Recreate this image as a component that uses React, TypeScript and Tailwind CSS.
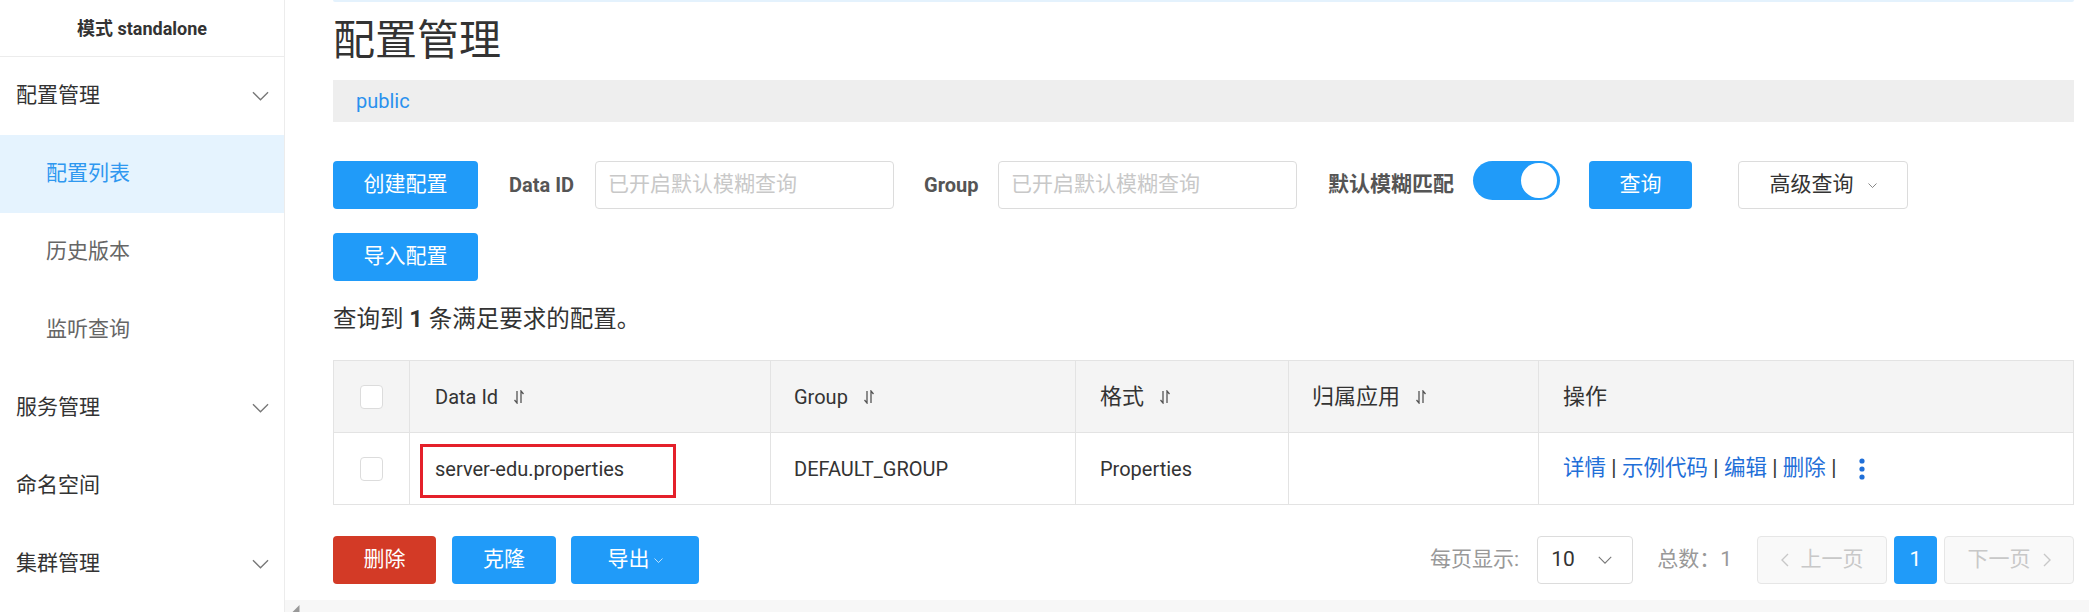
import React from 'react';

const font = "font-['Roboto','Noto_Sans_CJK_SC',sans-serif]";

const Chevron: React.FC<{ className?: string }> = ({ className }) => (
  <svg viewBox="0 0 18 10" className={className} fill="none" stroke="currentColor" strokeWidth="1.4">
    <polyline points="1,1 9,9 17,1" />
  </svg>
);

const SortIcon: React.FC = () => (
  <svg viewBox="0 0 12 14" className="w-[12px] h-[14px] ml-[15px] text-[#555]" fill="none" stroke="currentColor" strokeWidth="1.3">
    <path d="M4 1V13L1.5 10" />
    <path d="M8 13V1L10.5 4" />
  </svg>
);

const Checkbox: React.FC = () => (
  <div className="w-[23px] h-[24px] rounded-[4px] border border-[#dcdcdc] bg-white" />
);

const menu = [
  { label: '配置管理', parent: true },
  { label: '配置列表', active: true },
  { label: '历史版本' },
  { label: '监听查询' },
  { label: '服务管理', parent: true },
  { label: '命名空间', parent: true, noArrow: true },
  { label: '集群管理', parent: true },
];

const Sidebar: React.FC = () => (
  <aside className="w-[285px] shrink-0 border-r border-[#ececec] flex flex-col">
    <div className="h-[57px] border-b border-[#ececec] flex items-center justify-center text-[18px] font-bold text-[#333]">
      模式 standalone
    </div>
    {menu.map((m) => (
      <div
        key={m.label}
        className={`h-[78px] flex items-center justify-between pr-[15px] text-[21px] ${
          m.active ? 'bg-[#e5f3fe] text-[#2f98f0]' : m.parent ? 'text-[#333]' : 'text-[#666]'
        } ${m.parent ? 'pl-[16px]' : 'pl-[46px]'}`}
      >
        <span>{m.label}</span>
        {m.parent && !m.noArrow && <Chevron className="w-[17px] h-[10px] text-[#777]" />}
      </div>
    ))}
  </aside>
);

const blueBtn = 'h-[48px] rounded-[4px] bg-[#209bf9] text-white text-[21px] flex items-center justify-center shrink-0';

export default function App() {
  return (
    <div className={`w-[2089px] h-[612px] flex overflow-hidden bg-white ${font}`}>
      <Sidebar />
      <main className="flex-1 flex flex-col min-w-0">
        <div className="pl-[48px] pr-[15px] flex flex-col">
          <div className="h-[2px] bg-[#e4f2fd] rounded-b-[3px]" />
          <h1 className="mt-[18px] text-[42px] leading-[42px] text-[#333] font-normal">配置管理</h1>
          <div className="mt-[18px] h-[42px] bg-[#eeeeee] flex items-center pl-[23px] text-[20px] text-[#2a91ee]">
            public
          </div>

          <div className="mt-[39px] flex items-start">
            <button className={`${blueBtn} w-[145px]`}>创建配置</button>
            <span className="ml-[31px] w-[66px] h-[48px] flex items-center text-[20px] font-bold text-[#555] whitespace-nowrap">Data ID</span>
            <div className="ml-[20px] w-[299px] h-[48px] border border-[#dcdcdc] rounded-[4px] flex items-center pl-[12px] text-[21px] text-[#c8c8c8]">
              已开启默认模糊查询
            </div>
            <span className="ml-[30px] w-[55px] h-[48px] flex items-center text-[20px] font-bold text-[#555]">Group</span>
            <div className="ml-[19px] w-[299px] h-[48px] border border-[#dcdcdc] rounded-[4px] flex items-center pl-[12px] text-[21px] text-[#c8c8c8]">
              已开启默认模糊查询
            </div>
            <span className="ml-[31px] w-[127px] h-[48px] flex items-center text-[21px] font-bold text-[#555] whitespace-nowrap">默认模糊匹配</span>
            <div className="ml-[18px] w-[87px] h-[39px] rounded-full bg-[#209bf9] flex items-center justify-end pr-[3px] shrink-0">
              <div className="w-[36px] h-[35px] rounded-full bg-white" />
            </div>
            <button className={`${blueBtn} ml-[29px] w-[103px]`}>查询</button>
            <button className="ml-[46px] w-[170px] h-[48px] rounded-[4px] border border-[#dcdcdc] bg-white flex items-center justify-center gap-[14px] text-[21px] text-[#333]">
              高级查询
              <Chevron className="w-[9px] h-[5px] text-[#555]" />
            </button>
          </div>

          <div className="mt-[24px] flex">
            <button className={`${blueBtn} w-[145px]`}>导入配置</button>
          </div>

          <div className="mt-[24px] h-[30px] flex items-center text-[23.5px] text-[#333] whitespace-pre">
            查询到 <b className="font-bold">1</b> 条满足要求的配置。
          </div>

          <div className="mt-[25px] border border-[#e3e3e3] text-[20px] text-[#333]">
            <div className="grid grid-cols-[75px_361px_305px_213px_250px_1fr] h-[72px] bg-[#f4f4f4] border-b border-[#e3e3e3]">
              <div className="flex items-center justify-center"><Checkbox /></div>
              <div className="border-l border-[#e3e3e3] pl-[25px] flex items-center">Data Id<SortIcon /></div>
              <div className="border-l border-[#e3e3e3] pl-[23px] flex items-center">Group<SortIcon /></div>
              <div className="border-l border-[#e3e3e3] pl-[24px] flex items-center text-[22px]">格式<SortIcon /></div>
              <div className="border-l border-[#e3e3e3] pl-[23px] flex items-center text-[22px]">归属应用<SortIcon /></div>
              <div className="border-l border-[#e3e3e3] pl-[24px] flex items-center text-[22px]">操作</div>
            </div>
            <div className="grid grid-cols-[75px_361px_305px_213px_250px_1fr] h-[71px]">
              <div className="flex items-center justify-center"><Checkbox /></div>
              <div className="relative border-l border-[#e3e3e3] pl-[25px] flex items-center">
                server-edu.properties
                <div className="absolute left-[10px] top-[11px] w-[256px] h-[54px] border-[3px] border-[#e4202a]" />
              </div>
              <div className="border-l border-[#e3e3e3] pl-[23px] flex items-center">DEFAULT_GROUP</div>
              <div className="border-l border-[#e3e3e3] pl-[24px] flex items-center">Properties</div>
              <div className="border-l border-[#e3e3e3]" />
              <div className="border-l border-[#e3e3e3] pl-[24px] flex items-center text-[21.5px] text-[#1f6fd8] whitespace-pre">
                详情<span className="text-[#333]"> | </span>示例代码<span className="text-[#333]"> | </span>编辑<span className="text-[#333]"> | </span>删除<span className="text-[#333]"> | </span>
                <svg viewBox="0 0 6 22" className="ml-[17px] w-[6px] h-[22px] text-[#1f6fd8]" fill="currentColor">
                  <circle cx="3" cy="3" r="2.6" />
                  <circle cx="3" cy="11" r="2.6" />
                  <circle cx="3" cy="19" r="2.6" />
                </svg>
              </div>
            </div>
          </div>

          <div className="mt-[31px] flex items-center justify-between">
            <div className="flex items-center">
              <button className="h-[48px] w-[103px] rounded-[4px] bg-[#d33a26] text-white text-[21px]">删除</button>
              <button className={`${blueBtn} ml-[16px] w-[104px]`}>克隆</button>
              <button className={`${blueBtn} ml-[15px] w-[128px] gap-[4px]`}>
                导出<Chevron className="w-[9px] h-[5px] text-white" />
              </button>
            </div>
            <div className="flex items-center text-[21px]">
              <span className="text-[#999]">每页显示:</span>
              <div className="ml-[18px] w-[96px] h-[48px] rounded-[4px] border border-[#dcdcdc] flex items-center justify-between pl-[13px] pr-[20px] text-[#333]">
                10
                <Chevron className="w-[14px] h-[8px] text-[#777]" />
              </div>
              <span className="ml-[24px] text-[#999]">总数：1</span>
              <div className="ml-[25px] w-[130px] h-[48px] rounded-[4px] border border-[#e6e6e6] bg-[#f9f9f9] flex items-center justify-center gap-[12px] text-[#c8c8c8]">
                <svg viewBox="0 0 8 14" className="w-[8px] h-[14px]" fill="none" stroke="currentColor" strokeWidth="1.4"><polyline points="7,1 1,7 7,13" /></svg>
                上一页
              </div>
              <div className="ml-[7px] w-[43px] h-[48px] rounded-[4px] bg-[#209bf9] text-white flex items-center justify-center">1</div>
              <div className="ml-[7px] w-[130px] h-[48px] rounded-[4px] border border-[#e6e6e6] bg-[#f9f9f9] flex items-center justify-center gap-[12px] text-[#c8c8c8]">
                下一页
                <svg viewBox="0 0 8 14" className="w-[8px] h-[14px]" fill="none" stroke="currentColor" strokeWidth="1.4"><polyline points="1,1 7,7 1,13" /></svg>
              </div>
            </div>
          </div>
        </div>

        <div className="mt-auto h-[12px] bg-[#f7f7f7] flex items-end pl-[7px]">
          <svg viewBox="0 0 8 8" className="w-[8px] h-[7px] text-[#999]" fill="currentColor"><polygon points="8,0 8,8 0,8" /></svg>
        </div>
      </main>
    </div>
  );
}
